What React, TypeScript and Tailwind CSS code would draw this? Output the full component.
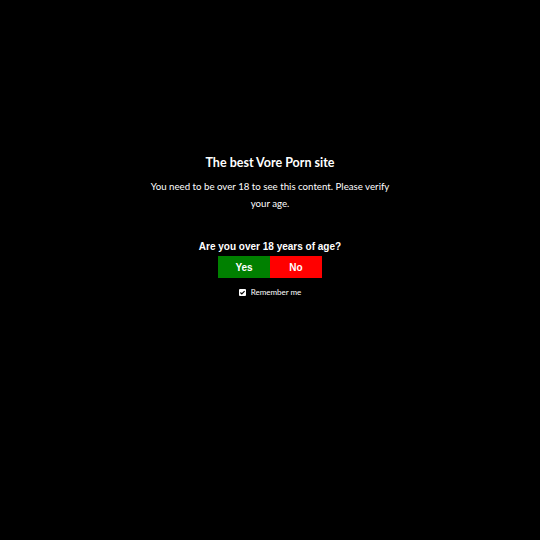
import React from "react";

export default function App() {
  return (
    <div className="w-[540px] h-[540px] bg-black flex flex-col items-center text-white">
      <div className="mt-[153px] w-[300px] flex flex-col items-center text-center">
        <h1 className="text-[12.5px] leading-[20px] font-bold font-['Lato',sans-serif]">The best Vore Porn site</h1>
        <p className="mt-[5px] text-[9.7px] leading-[17px] font-['Lato',sans-serif] font-normal">
          You need to be over 18 to see this content. Please verify
          <br />
          your age.
        </p>
        <h2 className="mt-[28px] text-[10px] leading-[13px] font-bold font-['Liberation_Sans',Arial,sans-serif]">Are you over 18 years of age?</h2>
        <div className="mt-[3px] flex">
          <button className="w-[52px] h-[22px] bg-[#008000] text-white text-[10px] font-bold font-['Liberation_Sans',Arial,sans-serif]">Yes</button>
          <button className="w-[52px] h-[22px] bg-[#ff0000] text-white text-[10px] font-bold font-['Liberation_Sans',Arial,sans-serif]">No</button>
        </div>
        <label className="mt-[8px] flex items-center gap-[5px] text-[8px] font-['Lato',sans-serif]">
          <span className="w-[7px] h-[7px] bg-white rounded-[1px] flex items-center justify-center">
            <svg viewBox="0 0 10 10" className="w-[7px] h-[7px]"><path d="M2 5 L4 7 L8 3" stroke="#000" strokeWidth="1.6" fill="none" /></svg>
          </span>
          Remember me
        </label>
      </div>
    </div>
  );
}
